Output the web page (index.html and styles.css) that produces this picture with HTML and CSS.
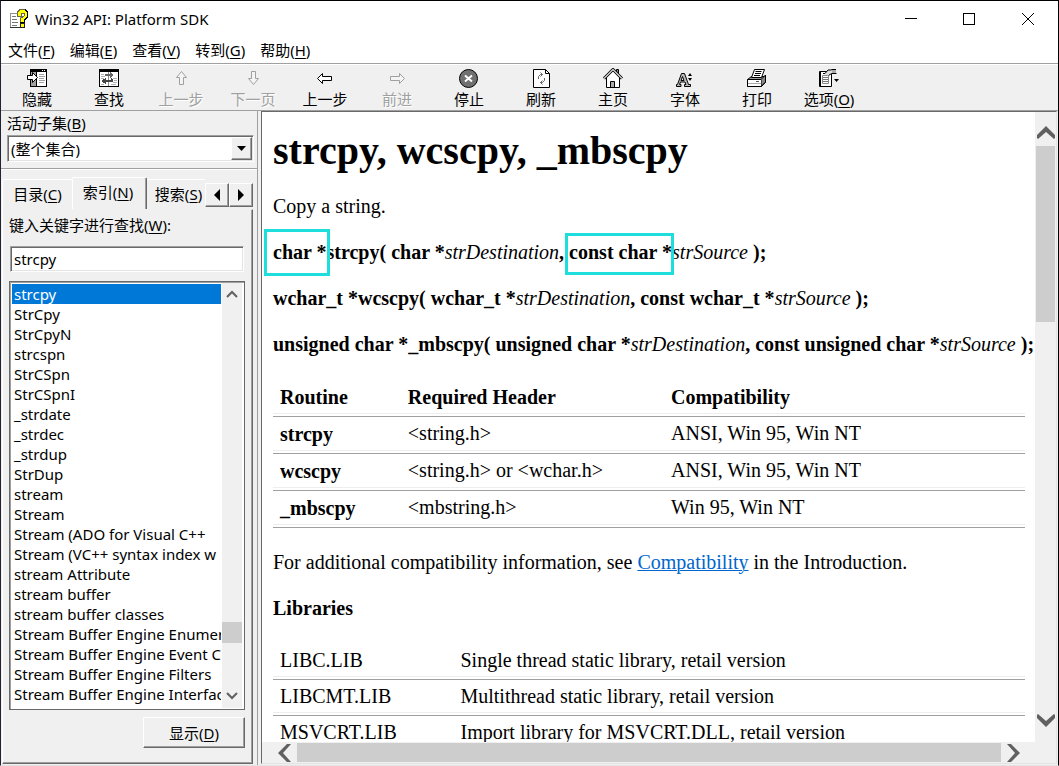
FILE: index.html
```html
<!DOCTYPE html>
<html lang="zh-CN">
<head>
<meta charset="utf-8">
<title>Win32 API: Platform SDK</title>
<link rel="stylesheet" href="styles.css">
</head>
<body>
<div class="window">
  <header class="titlebar">
    <svg class="app-icon" width="20" height="20" viewBox="0 0 20 20" shape-rendering="crispEdges">
      <path d="M1.500 4.500h10v14h-10z" fill="#fff" stroke="#909090"/>
      <path d="M3 7.500h4M3 10.500h5M3 13.500h6M3 16.500h5" stroke="#777"/>
      <path d="M1 18.500h12" stroke="#333"/>
      <path d="M8 7V3l3-3h5l3 3v5l-3 3v3h-5v-4l4-3V4h-3v3z" fill="#ff0"/>
      <path d="M8.500 7V3l2.500-2.500h5M8 7.500h4V4h3v3l-4 3v3" fill="none" stroke="#665"/>
      <path d="M16 .5l2.500 2.500v5l-3 3v2.500H11" fill="none" stroke="#000"/>
      <path d="M11.500 14.500h4v4h-4z" fill="#ff0" stroke="#222"/>
    </svg>
    <h1 class="title">Win32 API: Platform SDK</h1>
    <div class="window-buttons">
      <button class="window-button" aria-label="最小化"><svg width="12" height="12" shape-rendering="crispEdges"><path d="M0 5.500h12" stroke="#000"/></svg></button>
      <button class="window-button" aria-label="最大化"><svg width="12" height="12" shape-rendering="crispEdges"><path d="M.5 .5h11v11H.5z" fill="none" stroke="#000"/></svg></button>
      <button class="window-button" aria-label="关闭"><svg width="12" height="12"><path d="M0 0l12 12M12 0L0 12" stroke="#000"/></svg></button>
    </div>
  </header>

  <nav class="menubar">
    <button class="menu">文件(<u>F</u>)</button>
    <button class="menu">编辑(<u>E</u>)</button>
    <button class="menu">查看(<u>V</u>)</button>
    <button class="menu">转到(<u>G</u>)</button>
    <button class="menu">帮助(<u>H</u>)</button>
  </nav>

  <div class="toolbar" role="toolbar">
    <button class="tool">
      <svg width="22" height="20" shape-rendering="crispEdges"><path d="M4.500 1.500h16v17h-16z" fill="#fff" stroke="#000"/><path d="M4 1h17v2H4z"/><path d="M16 2h1M18 2h1" stroke="#fff"/><path d="M5 4h5v14H5z" fill="#a0a0a0"/><path d="M10.500 4v14M4 3.500h17" stroke="#000"/><path d="M13 6.500h5M13 8.500h6M13 10.500h5M13 12.500h6M13 14.500h5" stroke="#a0a0a0"/><path d="M1.500 7.500h5v-3l5 5-5 5v-3h-5z" fill="#fff" stroke="#000" shape-rendering="auto"/></svg>
      <span>隐藏</span></button>
    <button class="tool">
      <svg width="22" height="20" shape-rendering="crispEdges"><path d="M1.500 1.500h19v17h-19z" fill="#fff" stroke="#000"/><path d="M1 1h20v2H1z"/><path d="M1 3.500h20" stroke="#000"/><path d="M10.500 4v14" stroke="#888"/><path d="M3 6.500h3M3 8.500h4M3 10.500h3M3 16.500h3M15 10.500h4M16 12.500h3M15 14.500h4M13 16.500h5" stroke="#b0b0b0"/><path d="M7 8V6h5V4l4 3-4 3V8z" fill="#666"/><path d="M15 11v3H8v2l-5-3 5-3v2h5v-2z" fill="#444"/></svg>
      <span>查找</span></button>
    <button class="tool" disabled>
      <svg width="20" height="20"><path d="M10.500 3.500l5 6h-3v7h-4v-7h-3z" fill="#f4f4f4" stroke="#a0a0a0"/></svg>
      <span>上一步</span></button>
    <button class="tool" disabled>
      <svg width="20" height="20"><path d="M10.500 16.500l5-6h-3v-7h-4v7h-3z" fill="#f4f4f4" stroke="#a0a0a0"/></svg>
      <span>下一页</span></button>
    <button class="tool">
      <svg width="20" height="20"><path d="M2.500 10.500l5-5v3h9v4h-9v3z" fill="#fff" stroke="#000"/></svg>
      <span>上一步</span></button>
    <button class="tool" disabled>
      <svg width="20" height="20"><path d="M17.500 10.500l-5-5v3h-9v4h9v3z" fill="#f4f4f4" stroke="#a0a0a0"/></svg>
      <span>前进</span></button>
    <button class="tool">
      <svg width="20" height="20"><circle cx="9.500" cy="10.500" r="9" fill="#707070" stroke="#000"/><path d="M6 7.500l7 6M13 7.500l-7 6" stroke="#fff" stroke-width="2"/></svg>
      <span>停止</span></button>
    <button class="tool">
      <svg width="20" height="20"><path d="M2.500 1.500h12l4 4v14h-16z" fill="#fff" stroke="#000"/><path d="M14.500 1.500v4h4" fill="none" stroke="#000"/><path d="M7.500 11V8.500l2-2h2M9.500 4.500l2 2-2 2M13.500 10v2.500l-2 2h-2M11.500 16.500l-2-2 2-2" fill="none" stroke="#666"/></svg>
      <span>刷新</span></button>
    <button class="tool">
      <svg width="22" height="20"><path d="M14.500 5V1.500h2V8" fill="#888" stroke="#000"/><path d="M4.500 9v10.500h13V9L11 2.500z" fill="#fff" stroke="#000"/><path d="M2 10.500L11 1.500l9 9" fill="none" stroke="#000" stroke-width="3"/><path d="M2 10.500L11 1.500l9 9" fill="none" stroke="#ccc" stroke-width="1.500"/><path d="M8.500 19v-5.500h4V19" fill="#aaa" stroke="#000"/></svg>
      <span>主页</span></button>
    <button class="tool">
      <svg width="20" height="20"><path fill-rule="evenodd" d="M6.500 5.500h3l4 11h2v2H9.500v-2H11l-1-2.500H5.500l-1 2.500H6v2H1.500v-2h1zM7.500 8.500l-1.500 4h3z" fill="#bbb" stroke="#000"/><path d="M13 8h4l-2-3zM13 10h4l-2 3z" fill="#000"/></svg>
      <span>字体</span></button>
    <button class="tool">
      <svg width="22" height="20"><path d="M1.500 11.500l4-3h14v6l-4 4h-14z" fill="#999" stroke="#000"/><path d="M1.500 11.500h14v7h-14z" fill="#fff" stroke="#000"/><path d="M8.500 1.500h10l-3 8H5.500z" fill="#fff" stroke="#000"/><path d="M9.500 3.500h6M9 5.500h6M8 7.500h6" stroke="#000"/><path d="M15.500 11l4-4v7l-4 4" fill="#888" stroke="#000"/><path d="M2 15.500h13" stroke="#aaa"/><path d="M10 13.500h3" stroke="#555"/></svg>
      <span>打印</span></button>
    <button class="tool">
      <svg width="22" height="20"><path d="M1.500 3.500h12v15h-12z" fill="#fff" stroke="#000"/><path d="M2.500 4v14" stroke="#000"/><path d="M4.500 7.500h6v8h-6z" fill="#fff" stroke="#888"/><path d="M5 9.500h5M5 11.500h5M5 13.500h5" stroke="#777"/><path d="M6 6l4-4h8v4h-5l-2 2z" fill="#ddd"/><path d="M14 2h4v4h-4z" fill="#aaa"/><path d="M5 5.500h2l3-3.500h3l1-.5h4M10.500 7.500l3-2h5" fill="none" stroke="#000"/><path d="M16 11h5l-2.500 3z" fill="#000"/></svg>
      <span>选项(<u>O</u>)</span></button>
  </div>

  <main class="workspace">
    <aside class="sidebar">
      <div class="subset">
        <label for="subset">活动子集(<u>B</u>)</label>
        <div class="combo">
          <select id="subset"><option>(整个集合)</option></select>
          <span class="combo-arrow"><svg width="9" height="5"><path d="M0 0h9L4.500 5z"/></svg></span>
        </div>
      </div>
      <div class="navigator">
        <div class="tabs" role="tablist">
          <button class="tab" role="tab">目录(<u>C</u>)</button>
          <button class="tab tab-active" role="tab" aria-selected="true">索引(<u>N</u>)</button>
          <button class="tab tab-last" role="tab">搜索(<u>S</u>)</button>
          <div class="tab-scroll">
            <button aria-label="向左"><svg width="6" height="12"><path d="M6 0v12L0 6z"/></svg></button>
            <button aria-label="向右"><svg width="6" height="12"><path d="M0 0v12l6-6z"/></svg></button>
          </div>
        </div>
        <section class="panel" role="tabpanel">
          <label class="keyword-label" for="keyword">键入关键字进行查找(<u>W</u>):</label>
          <input class="keyword" id="keyword" type="text" value="strcpy">
          <div class="listbox">
            <ul class="entries" role="listbox" aria-label="索引">
              <li class="selected" role="option" aria-selected="true">strcpy</li>
              <li role="option">StrCpy</li>
              <li role="option">StrCpyN</li>
              <li role="option">strcspn</li>
              <li role="option">StrCSpn</li>
              <li role="option">StrCSpnI</li>
              <li role="option">_strdate</li>
              <li role="option">_strdec</li>
              <li role="option">_strdup</li>
              <li role="option">StrDup</li>
              <li role="option">stream</li>
              <li role="option">Stream</li>
              <li role="option">Stream (ADO for Visual C++</li>
              <li role="option">Stream (VC++ syntax index w</li>
              <li role="option">stream Attribute</li>
              <li role="option">stream buffer</li>
              <li role="option">stream buffer classes</li>
              <li role="option">Stream Buffer Engine Enumer</li>
              <li role="option">Stream Buffer Engine Event C</li>
              <li role="option">Stream Buffer Engine Filters</li>
              <li role="option">Stream Buffer Engine Interfac</li>
            </ul>
            <div class="list-scroll">
              <svg width="12" height="8"><path d="M1 7l5-5 5 5" fill="none" stroke="#606060" stroke-width="2"/></svg>
              <div class="list-track"><div class="list-thumb"></div></div>
              <svg width="12" height="8"><path d="M1 1l5 5 5-5" fill="none" stroke="#606060" stroke-width="2"/></svg>
            </div>
          </div>
          <button class="show">显示(<u>D</u>)</button>
        </section>
      </div>
    </aside>

    <div class="viewer">
      <article class="doc">
        <h2>strcpy, wcscpy, _mbscpy</h2>
        <p>Copy a string.</p>
        <p class="syntax"><b><span class="mark mark-return">char *</span>strcpy( char *</b><i>strDestination</i><b>, <span class="mark mark-param">const char *</span></b><i>strSource</i> <b>);</b></p>
        <p class="syntax"><b>wchar_t *wcscpy( wchar_t *</b><i>strDestination</i><b>, const wchar_t *</b><i>strSource</i> <b>);</b></p>
        <p class="syntax"><b>unsigned char *_mbscpy( unsigned char *</b><i>strDestination</i><b>, const unsigned char *</b><i>strSource</i> <b>);</b></p>
        <table class="routines">
          <thead><tr><th>Routine</th><th>Required Header</th><th>Compatibility</th></tr></thead>
          <tbody>
            <tr><th>strcpy</th><td>&lt;string.h&gt;</td><td>ANSI, Win 95, Win NT</td></tr>
            <tr><th>wcscpy</th><td>&lt;string.h&gt; or &lt;wchar.h&gt;</td><td>ANSI, Win 95, Win NT</td></tr>
            <tr><th>_mbscpy</th><td>&lt;mbstring.h&gt;</td><td>Win 95, Win NT</td></tr>
          </tbody>
        </table>
        <p>For additional compatibility information, see <a href="#compatibility">Compatibility</a> in the Introduction.</p>
        <p><b>Libraries</b></p>
        <table class="libraries">
          <tbody>
            <tr><td>LIBC.LIB</td><td>Single thread static library, retail version</td></tr>
            <tr><td>LIBCMT.LIB</td><td>Multithread static library, retail version</td></tr>
            <tr><td>MSVCRT.LIB</td><td>Import library for MSVCRT.DLL, retail version</td></tr>
          </tbody>
        </table>
      </article>
      <div class="vscroll">
        <svg width="18" height="14"><path d="M0 12v-3l9-9 9 9v3l-1 1-8-7-8 7z" fill="#606060"/></svg>
        <div class="vtrack"><div class="vthumb"></div></div>
        <svg width="18" height="14"><path d="M0 2v3l9 9 9-9V2l-1-1-8 7-8-7z" fill="#606060"/></svg>
      </div>
      <div class="hscroll">
        <svg width="14" height="18"><path d="M13 0h-4L0 9l9 9h4L5 9z" fill="#606060"/></svg>
        <div class="hthumb"></div>
        <svg width="14" height="18"><path d="M1 0h4l9 9-9 9H1l8-9z" fill="#606060"/></svg>
      </div>
    </div>
  </main>
</div>
</body>
</html>
```
FILE: styles.css
```css
* { box-sizing: border-box; }

body {
  margin: 0;
  height: 100vh;
  overflow: hidden;
  background: #f0f0f0;
  color: #000;
  font: 15px/20px "Noto Sans", "Noto Sans CJK SC", sans-serif;
}

button, select, input { font: inherit; color: inherit; }
button { border: 0; padding: 0; background: none; white-space: nowrap; }
u { text-underline-offset: 2px; text-decoration-thickness: 1px; }
svg { display: block; flex: none; }

.window {
  display: flex;
  flex-direction: column;
  height: 100%;
  border: 1px solid #000;
  border-left-color: #223;
  border-bottom-color: #e3e3e3;
}

/* Title bar and menu */
.titlebar {
  display: flex;
  align-items: center;
  height: 36px;
  flex: none;
  padding-left: 8px;
  gap: 6px;
  background: #fff;
}
.title { margin: 0; flex: 1; font-size: 15px; font-weight: 400; }
.window-buttons { display: flex; }
.window-button { display: grid; place-items: center; width: 58px; height: 36px; }
.window-button:last-child { width: 60px; }

.menubar {
  display: flex;
  align-items: center;
  gap: 15px;
  height: 26px;
  flex: none;
  padding: 0 0 1px 7px;
  background: #fff;
}

/* Toolbar */
.toolbar {
  display: flex;
  flex: none;
  height: 47px;
  border-top: 1px solid #a0a0a0;
  box-shadow: inset 0 1px #fff;
}
.tool {
  display: flex;
  flex-direction: column;
  align-items: center;
  gap: 1px;
  width: 72px;
  padding-top: 4px;
}
.tool:disabled { color: #a0a0a0; text-shadow: 1px 1px #fff; }

/* Workspace */
.workspace {
  display: grid;
  grid-template-columns: 257px 1fr;
  flex: 1;
  min-height: 0;
  border-top: 1px solid #a0a0a0;
}
.sidebar {
  display: flex;
  flex-direction: column;
  min-width: 0;
  min-height: 0;
  border-right: 1px solid #a0a0a0;
}
.subset {
  padding: 2px 3px 6px 6px;
  border-bottom: 1px solid #a0a0a0;
  box-shadow: 0 1px #fff;
}
.subset label { display: block; line-height: 20px; margin-bottom: 2px; }
.combo {
  display: grid;
  grid-template-columns: 1fr 21px;
  height: 27px;
  border: 1px solid;
  border-color: #a0a0a0 #fff #fff #a0a0a0;
  box-shadow: inset 1px 1px #696969, inset -1px -1px #e3e3e3;
  background: #fff;
  padding: 1px;
}
.combo select {
  appearance: none;
  border: 0;
  padding: 0 0 0 2px;
  background: none;
  grid-area: 1 / 1 / 2 / 3;
}
.combo-arrow {
  grid-area: 1 / 2;
  display: grid;
  place-items: center;
  pointer-events: none;
}
.combo-arrow, .tab-scroll button, .show {
  background: #f0f0f0;
  border: 1px solid;
  border-color: #fff #696969 #696969 #fff;
  box-shadow: inset -1px -1px #a0a0a0;
}

/* Tabs */
.navigator {
  display: flex;
  flex-direction: column;
  flex: 1;
  min-height: 0;
  padding: 8px 4px 1px 1px;
}
.tabs { display: flex; align-items: flex-end; height: 32px; flex: none; }
.tab {
  width: 70px;
  height: 30px;
  padding-bottom: 2px;
  border-top: 1px solid #fff;
  border-left: 1px solid #fff;
  border-radius: 2px 2px 0 0;
}
.tab-active {
  width: 75px;
  height: 32px;
  padding: 0 3px 4px 0;
  border-right: 1px solid #696969;
  box-shadow: inset -1px 0 #a0a0a0;
}
.tab-last { width: 58px; padding-left: 5px; border-left: 0; }
.tab-scroll { display: flex; align-self: center; padding-top: 3px; }
.tab-scroll button { display: grid; place-items: center; width: 24px; height: 24px; }
.panel {
  display: flex;
  flex-direction: column;
  flex: 1;
  min-height: 0;
  padding: 5px 7px 15px 6px;
  border: 1px solid;
  border-color: transparent #696969 #696969 #fff;
  box-shadow: inset -1px -1px #a0a0a0;
}
.keyword-label { margin-bottom: 11px; }
.keyword {
  height: 26px;
  margin: 0 1px 9px 1px;
  padding: 2px 3px;
  border: 1px solid;
  border-color: #a0a0a0 #fff #fff #a0a0a0;
  border-radius: 0;
  box-shadow: inset 1px 1px #696969, inset -1px -1px #e3e3e3;
  background: #fff;
}
.listbox {
  display: grid;
  grid-template-columns: 1fr 20px;
  flex: 1;
  min-height: 0;
  padding: 1px 2px 1px 1px;
  border: 1px solid #696969;
  box-shadow: inset 1px 1px #a0a0a0;
  background: #fff;
}
.entries {
  min-width: 0;
  min-height: 0;
  margin: 0;
  padding: 1px;
  overflow: hidden;
  list-style: none;
}
.entries li { padding-left: 2px; white-space: nowrap; overflow: hidden; }
.entries .selected { background: #0078d7; color: #fff; }
.list-scroll {
  display: flex;
  flex-direction: column;
  align-items: center;
  padding: 7px 0 8px;
  background: #f0f0f0;
}
.list-track { display: flex; flex-direction: column; justify-content: flex-end; flex: 1; width: 100%; padding-bottom: 49px; }
.list-thumb { height: 21px; background: #cdcdcd; }
.show { align-self: flex-end; width: 102px; height: 31px; margin-top: 7px; flex: none; }

/* Topic viewer */
.viewer {
  display: grid;
  grid-template: 1fr 21px / 1fr 21px;
  min-width: 0;
  min-height: 0;
  margin: 0 1px 1px 3px;
  border: 1px solid;
  border-color: #696969 #e3e3e3 #e3e3e3 #696969;
}
.doc {
  min-width: 0;
  min-height: 0;
  overflow: hidden;
  padding: 19px 10px 0 11px;
  background: #fff;
  font: 20px/22px "Liberation Serif", serif;
}
.doc h2 { margin: 0 0 24px; font-size: 40px; line-height: 40px; }
.doc p { margin: 0 0 24px; white-space: nowrap; }
.doc a { color: #0066cc; text-decoration-thickness: 1px; }
.mark { position: relative; }
.mark::after { content: ""; position: absolute; border: 3px solid #1ddddd; }
.mark-return::after { inset: -12px -3px -13px -9px; }
.mark-param::after { inset: -8px -2px -12px -4px; }

table { border-collapse: collapse; width: 100%; table-layout: fixed; }
th, td {
  padding: 5px 7px 9px;
  text-align: left;
  border-bottom: 1px solid #a0a0a0;
  box-shadow: inset 0 -2px #fff, inset 0 -3px #eee;
}
.routines { margin-bottom: 23px; }
.routines th { padding: 6px 7px 8px; }
.routines thead th { padding-top: 7px; }
.routines th:nth-child(1) { width: 17%; }
.routines th:nth-child(2) { width: 35%; }
.libraries { margin-top: 25px; }
.libraries td { padding: 5px 7px 8px; }
.libraries td:first-child { width: 24%; }

/* Scrollbars */
.vscroll, .hscroll { display: flex; align-items: center; background: #f0f0f0; }
.vscroll { flex-direction: column; padding: 14px 0 15px; }
.vtrack { flex: 1; width: 19px; padding-top: 6px; }
.vthumb { height: 31%; background: #cdcdcd; }
.hscroll { grid-column: 1 / 3; padding: 0 36px 0 16px; gap: 5px; }
.hthumb { flex: 1; height: 19px; background: #cdcdcd; }
```
